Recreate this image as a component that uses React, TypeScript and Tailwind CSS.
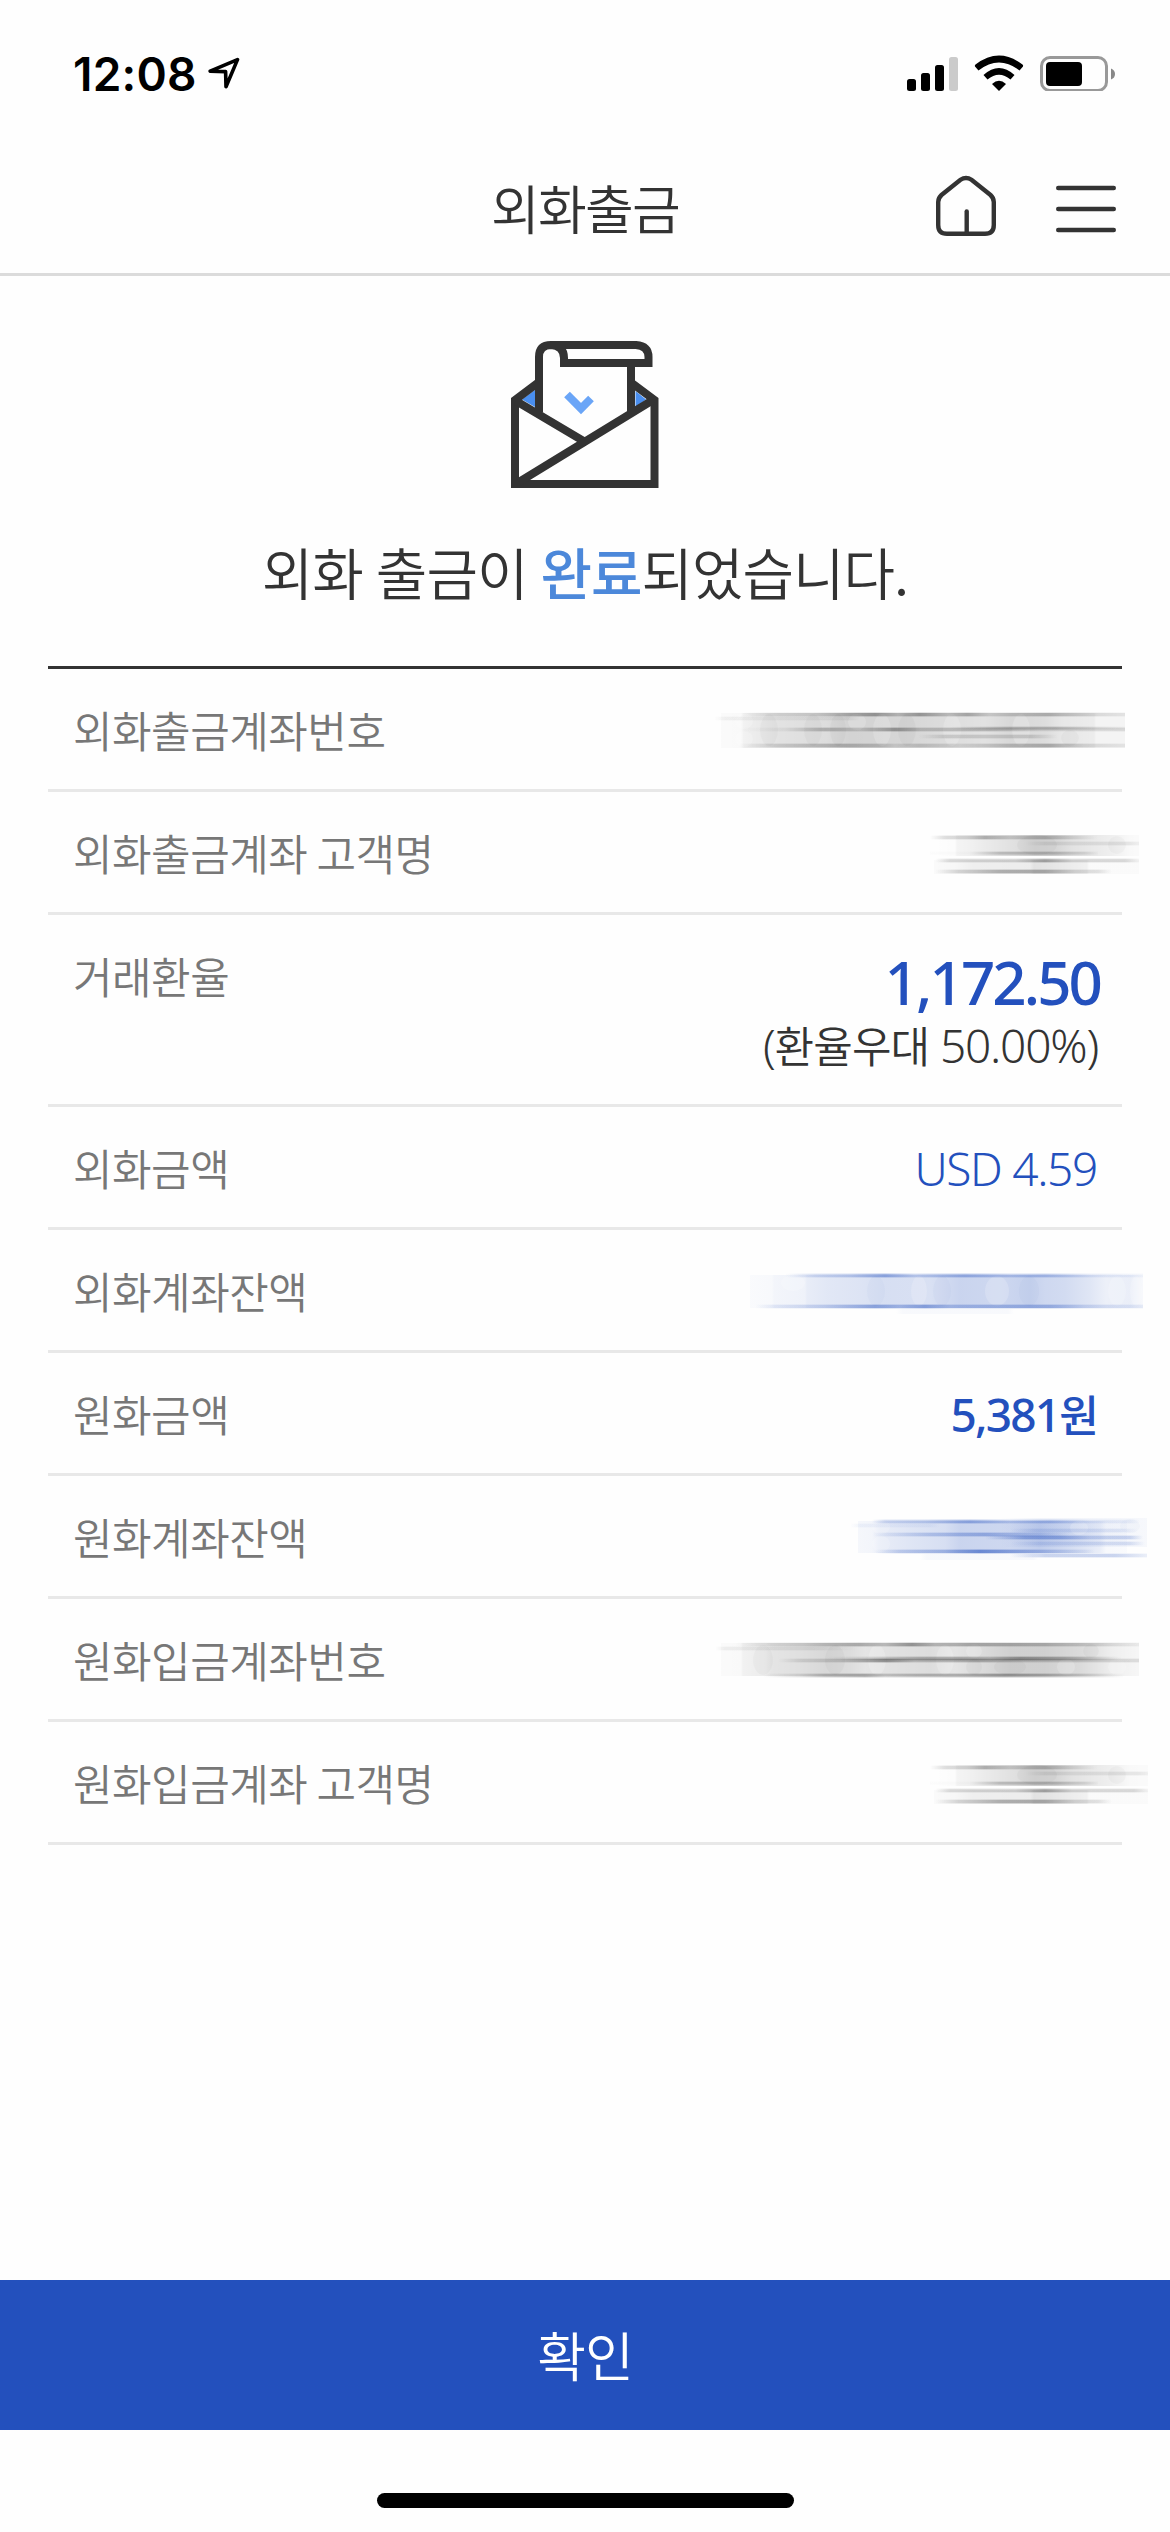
import type { ReactNode } from "react";

const GRAY = "#000000";
const BLUE = "#2350bd";

// [x, opacity] stops along the page's x axis
type Stop = [number, number];
type Band = { y: number; h: number; stops: Stop[] };
type Ghost = { cx: number; cy: number; rx: number; ry: number; dark?: boolean };
type SmudgeData = { id: string; blue?: boolean; bands: Band[]; streaks: Band[]; ghosts: Ghost[] };

const fxAccount: SmudgeData = {
  id: "fx-account",
  bands: [
    {
      y: 41,
      h: 35,
      stops: [[721, 0.015], [741, 0.02], [744, 0.06], [762, 0.08], [780, 0.11], [826, 0.13], [850, 0.17], [900, 0.16], [950, 0.13], [985, 0.11], [1010, 0.15], [1045, 0.13], [1062, 0.09], [1094, 0.07], [1096, 0.04], [1125, 0.04]],
    },
  ],
  streaks: [
    { y: 41, h: 3, stops: [[740, 0], [770, 0.1], [815, 0.14], [875, 0.38], [898, 0.2], [920, 0.38], [948, 0.2], [968, 0.32], [990, 0.14], [1050, 0.28], [1100, 0.12], [1125, 0.08]] },
    { y: 45, h: 3, stops: [[714, 0], [725, 0.05], [850, 0.06], [860, 0]] },
    { y: 56, h: 3, stops: [[740, 0], [785, 0.06], [825, 0.26], [860, 0.16], [895, 0.4], [920, 0.22], [990, 0.22], [1040, 0.08], [1125, 0.12]] },
    { y: 55, h: 2.5, stops: [[950, 0], [1010, 0.22], [1055, 0.24], [1095, 0.1], [1125, 0.03]] },
    { y: 63, h: 3, stops: [[918, 0], [945, 0.14], [1030, 0.16], [1058, 0]] },
    { y: 72, h: 3, stops: [[738, 0], [775, 0.14], [840, 0.26], [880, 0.2], [895, 0.1], [920, 0.18], [960, 0.1], [1000, 0.2], [1050, 0.3], [1085, 0.14], [1125, 0.08]] },
  ],
  ghosts: [
    { cx: 744, cy: 49, rx: 9, ry: 8 },
    { cx: 744, cy: 67, rx: 9, ry: 8 },
    { cx: 769, cy: 58, rx: 9, ry: 16, dark: true },
    { cx: 813, cy: 58, rx: 9, ry: 16, dark: true },
    { cx: 838, cy: 58, rx: 8, ry: 16, dark: true },
    { cx: 857, cy: 50, rx: 9, ry: 8 },
    { cx: 882, cy: 58, rx: 9, ry: 16 },
    { cx: 907, cy: 58, rx: 9, ry: 16, dark: true },
    { cx: 952, cy: 58, rx: 9, ry: 16 },
    { cx: 1021, cy: 58, rx: 9, ry: 16 },
    { cx: 1070, cy: 66, rx: 9, ry: 8, dark: true },
  ],
};

function nameSmudge(id: string, right: number): SmudgeData {
  return {
    id,
    bands: [
      { y: 40, h: 21, stops: [[935, 0], [955, 0.01], [957, 0.04], [968, 0.05], [995, 0.09], [1015, 0.12], [1035, 0.17], [1055, 0.16], [1072, 0.11], [1095, 0.08], [1111, 0.06], [1130, 0.02], [right, 0.015]] },
      { y: 65, h: 14, stops: [[934, 0.015], [956, 0.03], [974, 0.06], [1030, 0.07], [1034, 0.11], [1048, 0.1], [1070, 0.07], [1087, 0.05], [1089, 0.015], [right, 0.015]] },
    ],
    streaks: [
      { y: 41, h: 3, stops: [[930, 0], [945, 0.14], [968, 0.18], [985, 0.32], [1010, 0.18], [1045, 0.26], [1070, 0.14], [1098, 0]] },
      { y: 47, h: 3, stops: [[1025, 0], [1045, 0.08], [right - 10, 0.09], [right, 0.05]] },
      { y: 57, h: 2.5, stops: [[930, 0.01], [970, 0.02], [1000, 0.22], [1050, 0.24], [1085, 0.12], [1098, 0.02]] },
      { y: 64, h: 3, stops: [[935, 0], [950, 0.15], [1015, 0.17], [1045, 0.38], [1072, 0.16], [right - 14, 0.16], [right, 0.04]] },
      { y: 75, h: 3, stops: [[935, 0], [958, 0.16], [974, 0.2], [1000, 0.32], [1045, 0.34], [1075, 0.16], [1098, 0.12], [1112, 0]] },
    ],
    ghosts: [
      { cx: 1037, cy: 50, rx: 20, ry: 10, dark: true },
      { cx: 1117, cy: 50, rx: 9, ry: 9, dark: true },
    ],
  };
}

const fxBalance: SmudgeData = {
  id: "fx-balance",
  blue: true,
  bands: [
    { y: 42, h: 33, stops: [[750, 0.02], [772, 0.03], [774, 0.05], [805, 0.07], [807, 0.1], [827, 0.13], [860, 0.15], [885, 0.18], [930, 0.17], [960, 0.24], [1000, 0.22], [1030, 0.26], [1045, 0.22], [1065, 0.2], [1090, 0.14], [1106, 0.08], [1130, 0.09], [1143, 0.03]] },
    { y: 76, h: 5, stops: [[896, 0], [903, 0.03], [1008, 0.03], [1014, 0]] },
  ],
  streaks: [
    { y: 41, h: 3, stops: [[785, 0], [815, 0.2], [850, 0.3], [885, 0.55], [915, 0.25], [965, 0.45], [1010, 0.28], [1045, 0.35], [1090, 0.12], [1143, 0.05]] },
    { y: 72, h: 3, stops: [[755, 0], [775, 0.12], [825, 0.25], [875, 0.55], [900, 0.4], [925, 0.6], [950, 0.35], [1000, 0.4], [1050, 0.42], [1085, 0.2], [1143, 0.1]] },
  ],
  ghosts: [
    { cx: 793, cy: 50, rx: 12, ry: 8 },
    { cx: 876, cy: 58, rx: 9, ry: 15, dark: true },
    { cx: 919, cy: 58, rx: 8, ry: 15 },
    { cx: 942, cy: 58, rx: 9, ry: 15, dark: true },
    { cx: 997, cy: 58, rx: 12, ry: 15 },
    { cx: 1029, cy: 58, rx: 10, ry: 15, dark: true },
    { cx: 1117, cy: 58, rx: 9, ry: 15 },
    { cx: 1136, cy: 58, rx: 6, ry: 15 },
  ],
};

const krwBalance: SmudgeData = {
  id: "krw-balance",
  blue: true,
  bands: [
    { y: 42, h: 32, stops: [[858, 0.04], [872, 0.05], [880, 0.1], [910, 0.14], [945, 0.18], [960, 0.24], [1010, 0.22], [1040, 0.28], [1060, 0.22], [1085, 0.14], [1100, 0.09], [1106, 0.03], [1127, 0.02]] },
    { y: 39, h: 29, stops: [[1000, 0], [1040, 0.06], [1147, 0.035]] },
    { y: 75, h: 6, stops: [[920, 0], [927, 0.03], [1033, 0.03], [1038, 0]] },
  ],
  streaks: [
    { y: 41, h: 3, stops: [[872, 0], [885, 0.22], [925, 0.28], [970, 0.5], [1010, 0.25], [1050, 0.35], [1090, 0.12], [1130, 0.08], [1140, 0]] },
    { y: 45, h: 3, stops: [[850, 0], [860, 0.06], [930, 0.06], [940, 0]] },
    { y: 50, h: 3, stops: [[1010, 0], [1035, 0.16], [1120, 0.12], [1138, 0]] },
    { y: 54, h: 3, stops: [[872, 0], [890, 0.12], [930, 0.3], [985, 0.45], [1040, 0.2], [1070, 0]] },
    { y: 57, h: 3, stops: [[985, 0], [1025, 0.5], [1060, 0.5], [1090, 0.26], [1130, 0.26], [1143, 0]] },
    { y: 63, h: 3, stops: [[1010, 0], [1040, 0.14], [1130, 0.18], [1145, 0]] },
    { y: 71, h: 3, stops: [[875, 0], [900, 0.25], [945, 0.4], [980, 0.75], [1010, 0.55], [1040, 0.35], [1085, 0.1], [1095, 0]] },
    { y: 75, h: 3, stops: [[1010, 0], [1045, 0.28], [1115, 0.28], [1147, 0.1]] },
  ],
  ghosts: [
    { cx: 881, cy: 48, rx: 9, ry: 7 },
    { cx: 881, cy: 65, rx: 9, ry: 8 },
    { cx: 1079, cy: 49, rx: 9, ry: 7 },
    { cx: 1130, cy: 47, rx: 10, ry: 7, dark: true },
  ],
};

const krwAccount: SmudgeData = {
  id: "krw-account",
  bands: [
    { y: 41, h: 33, stops: [[721, 0.015], [741, 0.02], [743, 0.05], [765, 0.07], [772, 0.1], [800, 0.12], [825, 0.15], [850, 0.13], [865, 0.1], [905, 0.12], [930, 0.13], [955, 0.1], [990, 0.15], [1010, 0.18], [1045, 0.18], [1080, 0.14], [1097, 0.1], [1112, 0.06], [1139, 0.03]] },
  ],
  streaks: [
    { y: 41, h: 3, stops: [[735, 0], [760, 0.08], [805, 0.14], [840, 0.24], [860, 0.3], [885, 0.22], [912, 0.42], [935, 0.24], [970, 0.32], [1000, 0.28], [1045, 0.24], [1090, 0.16], [1139, 0.06]] },
    { y: 45, h: 3, stops: [[715, 0], [725, 0.06], [810, 0.08], [860, 0]] },
    { y: 57, h: 3, stops: [[778, 0], [800, 0.12], [840, 0.18], [885, 0.45], [915, 0.22], [980, 0.3], [1020, 0.2], [1139, 0.12]] },
    { y: 55, h: 3, stops: [[825, 0], [870, 0.12], [920, 0.28], [960, 0.3], [990, 0.22], [1020, 0.4], [1065, 0.3], [1095, 0.14], [1122, 0]] },
    { y: 72, h: 3, stops: [[762, 0], [800, 0.12], [825, 0.26], [865, 0.34], [885, 0.2], [915, 0.26], [965, 0.3], [1005, 0.38], [1045, 0.3], [1090, 0.14], [1125, 0]] },
  ],
  ghosts: [
    { cx: 763, cy: 58, rx: 10, ry: 15, dark: true },
    { cx: 835, cy: 58, rx: 10, ry: 15, dark: true },
    { cx: 877, cy: 58, rx: 9, ry: 15 },
    { cx: 945, cy: 58, rx: 9, ry: 15 },
    { cx: 974, cy: 49, rx: 8, ry: 7 },
    { cx: 974, cy: 65, rx: 8, ry: 8, dark: true },
    { cx: 1010, cy: 65, rx: 16, ry: 8, dark: true },
    { cx: 1066, cy: 65, rx: 9, ry: 8 },
    { cx: 1091, cy: 49, rx: 8, ry: 7, dark: true },
    { cx: 1117, cy: 65, rx: 9, ry: 8 },
  ],
};

function Strip({ id, band, color, soft }: { id: string; band: Band; color: string; soft?: boolean }) {
  const start = band.stops[0][0];
  const end = band.stops[band.stops.length - 1][0];
  return (
    <>
      <linearGradient id={id} gradientUnits="userSpaceOnUse" x1={start} x2={end} y1="0" y2="0">
        {band.stops.map(([x, o]) => (
          <stop key={x} offset={(x - start) / (end - start)} stopColor={color} stopOpacity={o} />
        ))}
      </linearGradient>
      <rect x={start} y={band.y} width={end - start} height={band.h} fill={`url(#${id})`} opacity={soft ? 0.6 : 1} />
      {soft && <rect x={start} y={band.y - 1} width={end - start} height={band.h + 2} fill={`url(#${id})`} opacity={0.3} />}
    </>
  );
}

// Smeared value that hides private account data
function Smudge({ data }: { data: SmudgeData }) {
  const color = data.blue ? BLUE : GRAY;
  return (
    <svg className="absolute top-[3px] -right-12 h-[120px] w-[470px]" viewBox="700 0 470 120" aria-hidden="true">
      {data.bands.map((b, i) => (
        <Strip key={i} id={`${data.id}-band-${i}`} band={b} color={color} />
      ))}
      {data.ghosts.map((g, i) => (
        <ellipse key={i} cx={g.cx} cy={g.cy} rx={g.rx} ry={g.ry} fill={g.dark ? color : "#fff"} opacity={g.dark ? 0.025 : 0.18} />
      ))}
      {data.streaks.map((b, i) => (
        <Strip key={i} id={`${data.id}-streak-${i}`} band={b} color={color} soft />
      ))}
    </svg>
  );
}

function StatusBar() {
  return (
    <div className="flex h-[150px] items-start justify-between pt-[49px] pr-[54px] pl-[73px]">
      <div className="flex items-start">
        <span className="font-['Inter'] text-[46px] leading-[50px] font-semibold tracking-[0.2px] text-black">12:08</span>
        <svg className="mt-2 ml-[11px] h-8 w-8" viewBox="0 0 32 32" fill="none" stroke="#000" strokeWidth="3.6" strokeLinejoin="round">
          <path d="M29.5 2.6 2.2 14.2 17.6 14.6 18 29.7Z" />
        </svg>
      </div>
      <svg className="mt-[6px] h-9 w-[209px]" viewBox="907 55 209 36">
        <rect x="907" y="79" width="9" height="12" rx="2.5" />
        <rect x="921" y="73" width="9" height="18" rx="2.5" />
        <rect x="935" y="65" width="9" height="26" rx="2.5" />
        <rect x="949" y="57" width="9" height="34" rx="2.5" fill="#cbcbcb" />
        <path d="M975 66.5Q974.5 65.5 975.5 64.5Q999 46.5 1022.5 64.5Q1023.5 65.5 1023 66.5L1019.5 70.5Q999 54.5 978.5 70.5Z" />
        <path d="M983.5 75Q999 61 1014.5 75L1010.5 79.5Q999 70 987.5 79.5Z" />
        <path d="M992 84Q999 77.500 1006 84L999 91Z" />
        <rect x="1041.5" y="57.5" width="65" height="33" rx="8.5" fill="none" stroke="#999" strokeWidth="3" />
        <rect x="1046" y="62" width="36" height="24" rx="4" />
        <path d="M1111 68.5Q1115 70 1115 74T1111 79.5Z" fill="#888" />
      </svg>
    </div>
  );
}

function Header() {
  return (
    <header className="relative flex h-[126px] items-start justify-center border-b-[3px] border-[#dbdbdb]">
      <h1 className="mt-[22px] text-[53px] leading-[70px] tracking-[-1.8px] text-[#333]">외화출금</h1>
      <div className="absolute top-[25px] right-[54px] flex gap-[60px]">
        <svg className="h-[62px] w-[60px]" viewBox="0 0 60 62" fill="none" stroke="#333" strokeWidth="4.4" strokeLinecap="round">
          <path d="M24.5 4.8Q30 1 35.5 4.8L54.5 20Q57.8 23 57.8 27V50Q57.8 58.8 49 58.8H11Q2.2 58.8 2.2 50V27Q2.2 23 5.5 20Z" />
          <path d="M30.7 36.5V58" />
        </svg>
        <svg className="h-[62px] w-[60px]" viewBox="0 0 60 62" fill="none" stroke="#333" strokeWidth="4.4" strokeLinecap="round">
          <path d="M2.2 13H57.8M2.2 34H57.8M2.2 55H57.8" />
        </svg>
      </div>
    </header>
  );
}

function EnvelopeIcon() {
  return (
    <svg className="h-[148px] w-[148px]" viewBox="511 341 148 148" fill="none" stroke="#333" strokeWidth="8">
      <path d="M522 399.5 535 390V407ZM646 399.5 635.5 391V407Z" fill="#4a8ff0" stroke="none" />
      <path d="M539 382 515 400V484H654.5V400L631 382.5" />
      <path d="M516 401 586 442.5M519 482 653 400" />
      <path d="M539 412V357Q539 345 551 345H636Q648.5 346 648.5 357V363H564V358Q564 346 551 345M631 365V412" />
      <path d="M567 394.5 581 408.5 591 398.5" stroke="#6aa5f7" />
    </svg>
  );
}

const label = "text-[43px] leading-[60px] tracking-[-0.5px] text-[#777]";

function Row({ title, smudge, children }: { title: string; smudge?: SmudgeData; children?: ReactNode }) {
  return (
    <div className="relative flex h-[123px] justify-between border-b-[3px] border-[#e8e8e8] px-[25px] pt-[30px]">
      <dt className={label}>{title}</dt>
      <dd className="font-['Noto_Sans','Noto_Sans_CJK_KR',sans-serif] text-[46px] leading-[62px] tracking-[-1.3px] text-[#2350bd]">
        {children}
        {smudge && <Smudge data={smudge} />}
      </dd>
    </div>
  );
}

export default function App() {
  return (
    <div className="flex h-[2532px] w-[1170px] flex-col overflow-hidden bg-[#fefefe] font-['Noto_Sans_CJK_KR',sans-serif] font-[350]">
      <StatusBar />
      <Header />

      <main className="flex-1 px-12">
        <div className="flex flex-col items-center pt-[65px]">
          <EnvelopeIcon />
          <p className="mt-[42px] text-[56px] leading-[80px] tracking-[-1px] text-[#333] [word-spacing:1.5px]">
            외화 출금이 <strong className="font-medium text-[#4c88da]">완료</strong>되었습니다.
          </p>
        </div>

        <dl className="mt-[55px] border-t-[3px] border-[#333]">
          <Row title="외화출금계좌번호" smudge={fxAccount} />
          <Row title="외화출금계좌 고객명" smudge={nameSmudge("fx-name", 1139)} />
          <div className="flex h-[192px] justify-between border-b-[3px] border-[#e8e8e8] px-[25px] pt-[30px]">
            <dt className={label}>거래환율</dt>
            <dd className="text-right font-['Noto_Sans','Noto_Sans_CJK_KR',sans-serif] text-[#333]">
              <div className="-mr-[3px] text-[60px] leading-[74px] font-medium tracking-[-2.9px] text-[#2350bd]">1,172.50</div>
              <div className="-mr-px text-[46px] leading-[52px] tracking-[-1.2px]">
                (<span className="text-[43px] tracking-[-0.9px]">환율우대</span> 50.00%)
              </div>
            </dd>
          </div>
          <Row title="외화금액">USD 4.59</Row>
          <Row title="외화계좌잔액" smudge={fxBalance} />
          <Row title="원화금액">
            <span className="font-medium tracking-[-1.8px]">
              5,381<span className="text-[43px]">원</span>
            </span>
          </Row>
          <Row title="원화계좌잔액" smudge={krwBalance} />
          <Row title="원화입금계좌번호" smudge={krwAccount} />
          <Row title="원화입금계좌 고객명" smudge={nameSmudge("krw-name", 1148)} />
        </dl>
      </main>

      <button className="h-[150px] w-full bg-[#2350bd] text-[53px] tracking-[-1px] text-white">확인</button>
      <div className="flex h-[102px] items-end justify-center pb-6">
        <div className="h-[15px] w-[417px] rounded-full bg-black" />
      </div>
    </div>
  );
}
